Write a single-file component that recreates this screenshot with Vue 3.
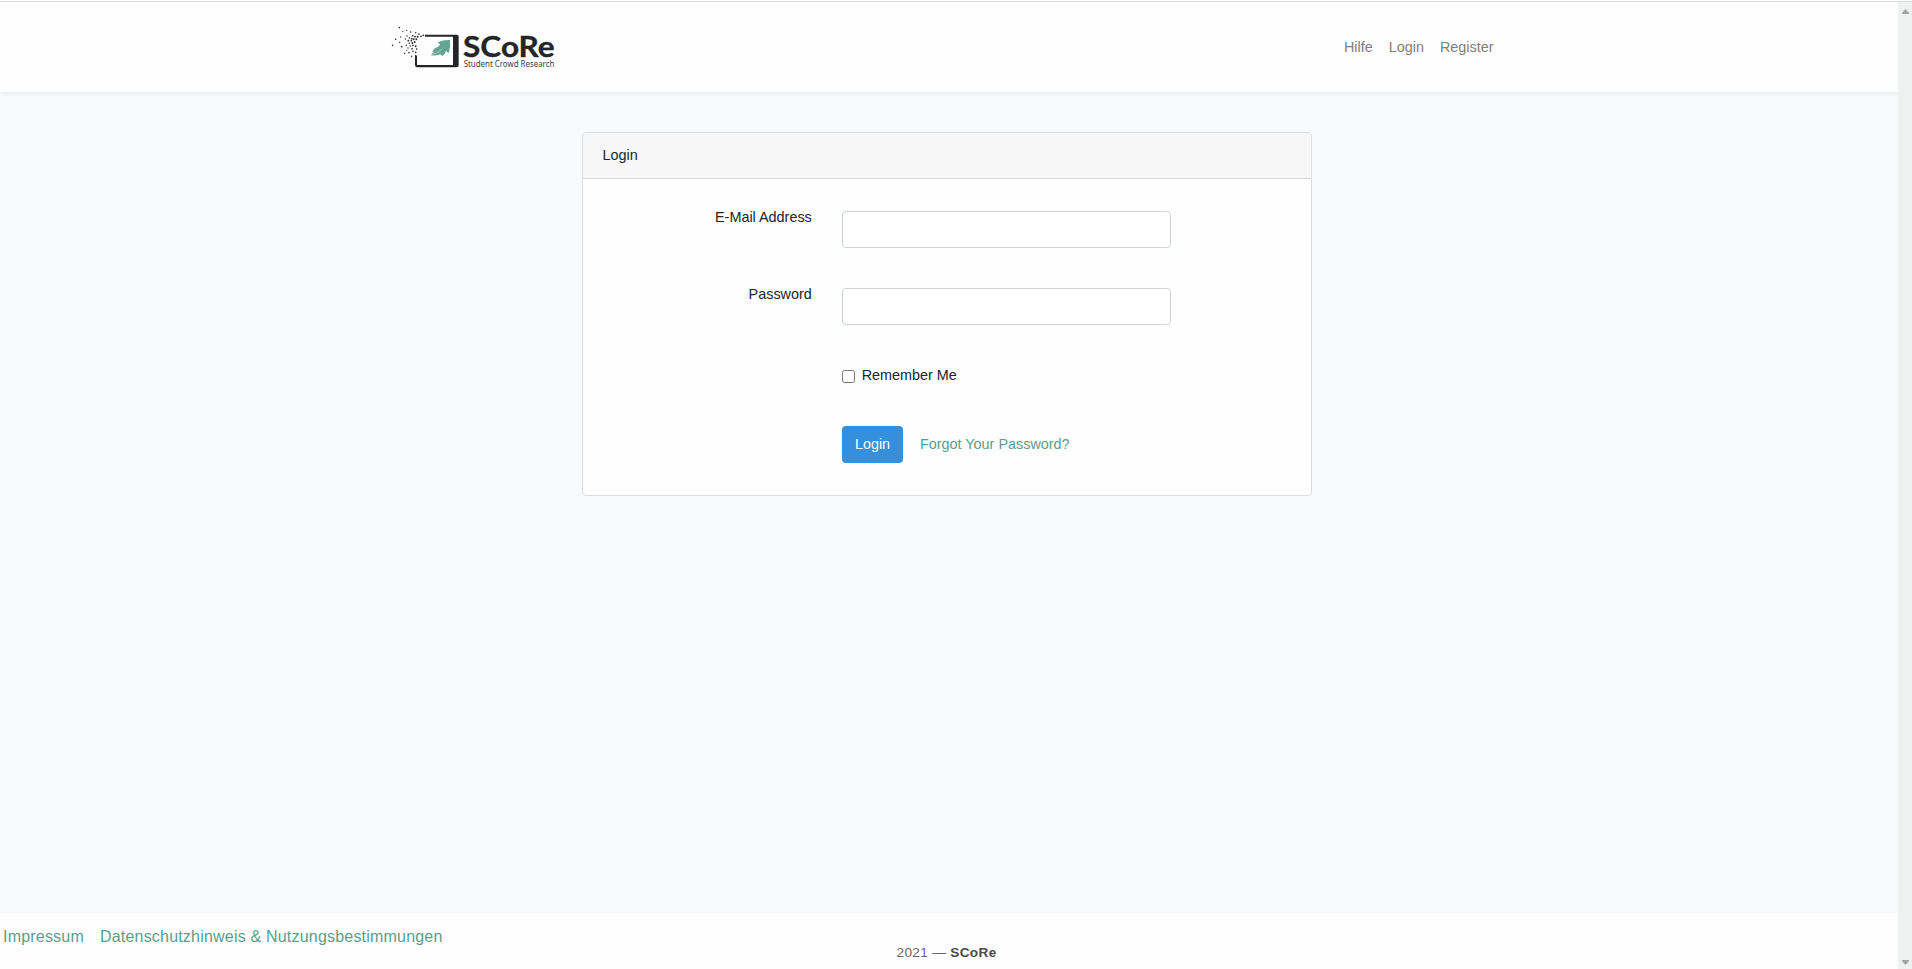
<script setup>
import { ref } from 'vue'

const email = ref('')
const password = ref('')
const remember = ref(false)
const navLinks = ['Hilfe', 'Login', 'Register']
const footerLinks = ['Impressum', 'Datenschutzhinweis & Nutzungsbestimmungen']

const dots = [
  [58, 38, 1.9], [80, 46, 1.6], [69, 49, 1.5], [92, 51, 1.9], [47, 73, 1.9], [62, 66, 1.6],
  [81, 63, 1.8], [88, 69, 1.8], [98, 62, 2], [107, 53, 1.8], [117, 57, 2.1],
  [130, 61, 2.2], [123, 64, 2.2], [113, 65, 2.4], [105, 65, 2.3], [95, 71, 2.1], [59, 82, 1.8],
  [85, 77, 2.1], [94, 77, 2.1], [101, 73, 2.4], [109, 73, 2.4],
  [76, 72, 1.7], [88, 85, 2], [97, 84, 2.4], [104, 81, 2.4],
  [38, 91, 2], [65, 95, 2], [79, 91, 1.8], [91, 93, 2], [99, 91, 2.2], [107, 94, 2.4],
  [84, 99, 1.8], [96, 101, 2], [110, 102, 2.1], [74, 115, 1.9], [87, 113, 1.9],
  [99, 109, 2], [107, 112, 2.1], [95, 124, 1.9], [80, 106, 1.5]
]
</script>

<template>
  <div class="window">
    <div class="page">
      <header class="navbar">
        <div class="nav-inner">
          <svg class="logo" viewBox="0 0 570 195" role="img" aria-label="SCoRe">
            <circle v-for="(d, i) in dots" :key="i" :cx="d[0]" :cy="d[1]" :r="d[2] + 0.5" fill="#333" />
            <path fill="#242526" fill-rule="evenodd" d="M135 59H230Q236 59 236 65V151Q236 157 230 157H112Q105 157 105 150V119L111 122V150H219V65H135Z" />
            <path fill="#63a590" d="M173 82Q191 74 210 75Q213 94 206 115L198 108Q195 118 187 123L181 118Q170 123 153 121Q154 116 162 112L157 109Q162 99 174 95Q178 93 180 88Z" />
            <path d="M157 119Q176 114 186 102" fill="none" stroke="#dcebe6" stroke-width="1.6" />
            <text class="brand" x="249" y="127" textLength="275" lengthAdjust="spacingAndGlyphs">SCoRe</text>
            <text class="tagline" x="251" y="156" textLength="272" lengthAdjust="spacingAndGlyphs">Student Crowd Research</text>
          </svg>
          <nav class="links"><a v-for="link in navLinks" :key="link">{{ link }}</a></nav>
        </div>
      </header>

      <main>
        <form class="card" @submit.prevent>
          <div class="card-header">Login</div>
          <div class="card-body">
            <div class="row">
              <label for="email">E-Mail Address</label>
              <input id="email" v-model="email" class="field" type="email">
            </div>
            <div class="row">
              <label for="password">Password</label>
              <input id="password" v-model="password" class="field" type="password">
            </div>
            <div class="check">
              <input id="remember" v-model="remember" type="checkbox">
              <label for="remember">Remember Me</label>
            </div>
            <div class="actions">
              <button type="submit">Login</button>
              <a>Forgot Your Password?</a>
            </div>
          </div>
        </form>
      </main>

      <footer>
        <div class="legal"><a v-for="link in footerLinks" :key="link">{{ link }}</a></div>
        <p class="copyright">2021 — <strong>SCoRe</strong></p>
      </footer>
    </div>
    <div class="scrollbar">
      <svg width="8" height="5" viewBox="0 0 8 5"><path d="M0 5V4L3.5 0L7 4V5Z" fill="#a3a3a3" /></svg>
      <svg width="8" height="5" viewBox="0 0 8 5"><path d="M0 0V1L3.5 5L7 1V0Z" fill="#a3a3a3" /></svg>
    </div>
  </div>
</template>

<style>
body { margin: 0; overflow: hidden; }
</style>

<style scoped>
* { box-sizing: border-box; }
.window {
  display: flex;
  height: 969px;
  padding-top: 1px;
  background: #fff;
  font: 14.4px/23px "Liberation Sans", Arial, sans-serif;
  color: #212529;
}
.page {
  flex: 1;
  display: flex;
  flex-direction: column;
  border-top: 1px solid #d8dbdb;
  background: #f8fafc;
}
.navbar {
  height: 90px;
  background: #fefefe;
  box-shadow: 0 2px 4px rgba(0, 0, 0, 0.06);
}
.nav-inner {
  display: flex;
  justify-content: space-between;
  height: 90px;
  padding: 13px 404.5px 0 380px;
}
.logo { width: 190px; height: 65px; }
.brand { font: 700 83px Lato, sans-serif; fill: #242526; stroke: #242526; stroke-width: 1; }
.tagline { font: 400 24.5px "Noto Sans", sans-serif; fill: #3c3d3e; }
.links {
  display: flex;
  gap: 16px;
  padding-top: 21px;
  color: #7f7f7f;
}
main { flex: 1; padding: 40px 0 0 582px; }
.card {
  width: 730px;
  height: 364px;
  border: 1px solid #dcdddf;
  border-radius: 4px;
  background: #fefefe;
  overflow: hidden;
}
.card-header {
  height: 46px;
  padding: 11px 19.5px;
  background: #f7f7f7;
  border-bottom: 1px solid #d9d9d9;
}
.card-body { padding-top: 32px; }
.row {
  display: grid;
  grid-template-columns: 228.8px 329px;
  gap: 30.2px;
  height: 77px;
}
.row label { text-align: right; margin-top: -5px; }
.field {
  width: 329px;
  height: 37px;
  padding: 6px 12px;
  border: 1px solid #ced4da;
  border-radius: 4px;
  background: #fff;
  font: inherit;
}
.check {
  display: flex;
  height: 61px;
  padding-left: 259px;
}
.check input {
  width: 13px;
  height: 13px;
  margin: 5px 6.7px 0 0;
}
.check label { margin-top: -1px; }
.actions {
  display: flex;
  align-items: center;
  gap: 17px;
  padding-left: 259px;
}
button {
  width: 61px;
  height: 37px;
  padding: 0;
  border: 0;
  border-radius: 4px;
  background: #3490dc;
  color: #fff;
  font: inherit;
}
.actions a, .legal { color: #5a9f8b; }
footer { height: 56px; background: #fefefe; }
.legal {
  display: flex;
  gap: 16px;
  padding: 12px 0 0 3px;
  font-size: 16px;
  line-height: 24px;
  letter-spacing: 0.2px;
}
.copyright {
  margin: -7px 0 0 896.5px;
  font-size: 13.6px;
  line-height: 21px;
  letter-spacing: 0.34px;
  color: #666;
}
.copyright strong { color: #4a4a4a; }
.scrollbar {
  display: flex;
  flex-direction: column;
  justify-content: space-between;
  align-items: center;
  width: 14px;
  padding: 7px 0 4px 2px;
  border-top: 1px solid #d8dbdb;
  background: #eff0f0;
}
</style>
